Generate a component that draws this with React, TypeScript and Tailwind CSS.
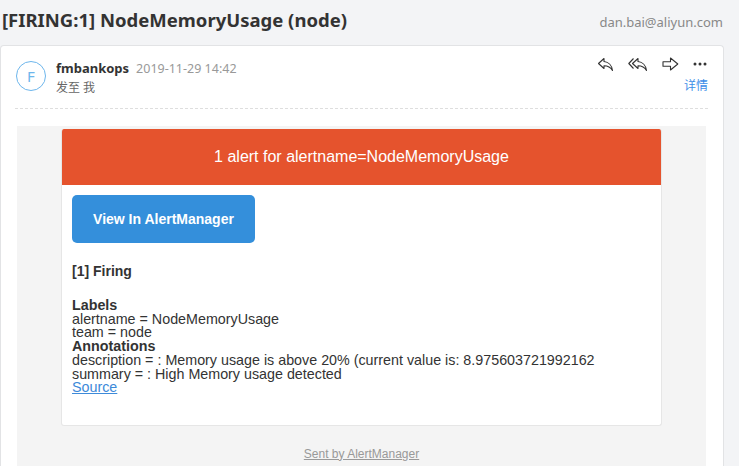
import React from "react";

const ui = "font-['Noto_Sans','Noto_Sans_CJK_SC',sans-serif]";
const mail = "font-['Liberation_Sans',Arial,sans-serif]";

function ReplyIcon() {
  return (
    <svg width="17" height="15" viewBox="0 0 17 15" fill="none" stroke="#333" strokeWidth="1.1" strokeLinejoin="round">
      <path d="M7 1.5 L1.5 6.5 L7 11.5 V8.7 C10.5 8.7 13.5 10 15.5 13.5 C15 8.5 11.5 5 7 4.5 Z" />
    </svg>
  );
}

function ReplyAllIcon() {
  return (
    <svg width="20" height="15" viewBox="0 0 20 15" fill="none" stroke="#333" strokeWidth="1.1" strokeLinejoin="round">
      <path d="M5.5 1.5 L0.8 6.5 L5.5 11.5" />
      <path d="M10 1.5 L4.5 6.5 L10 11.5 V8.7 C13.5 8.7 16.5 10 18.5 13.5 C18 8.5 14.5 5 10 4.5 Z" />
    </svg>
  );
}

function ForwardIcon() {
  return (
    <svg width="17" height="15" viewBox="0 0 17 15" fill="none" stroke="#333" strokeWidth="1.1" strokeLinejoin="round">
      <path d="M1 4.8 H8.5 V1 L15.8 7 L8.5 13 V9.2 H1 Z" />
    </svg>
  );
}

function MoreIcon() {
  return (
    <svg width="14" height="4" viewBox="0 0 14 4" fill="#333">
      <circle cx="2" cy="2" r="1.5" />
      <circle cx="7" cy="2" r="1.5" />
      <circle cx="12" cy="2" r="1.5" />
    </svg>
  );
}

export default function App() {
  return (
    <div className={`w-[739px] h-[466px] overflow-hidden bg-[#f3f4f6] ${ui}`}>
      {/* subject line */}
      <div className="flex h-[45px] items-start justify-between pl-[2px] pr-[16px]">
        <h1 className="mt-[8px] text-[18.5px] font-bold leading-[24px] text-[#333]">
          [FIRING:1] NodeMemoryUsage (node)
        </h1>
        <span className="mt-[13px] text-[13px] leading-[18px] text-[#888]">dan.bai@aliyun.com</span>
      </div>

      {/* message card */}
      <div className="mr-[15px] h-[421px] rounded-t-[4px] border border-b-0 border-[#e2e3e5] bg-white">
        <div className="flex h-[47px] items-start justify-between pl-[15px] pr-[16px] pt-[15px]">
          <div className="flex gap-[10px]">
            <div className="flex h-[30px] w-[30px] items-center justify-center rounded-full border border-[#6db6ec] text-[15px] text-[#6db6ec]">
              F
            </div>
            <div className="-mt-[2px]">
              <div className="flex items-baseline gap-[7px]">
                <span className="text-[13px] font-bold leading-[18px] text-[#333]">fmbankops</span>
                <span className="text-[12.5px] leading-[18px] text-[#999]">2019-11-29 14:42</span>
              </div>
              <div className="mt-[1px] text-[12px] leading-[17px] text-[#666]">发至 我</div>
            </div>
          </div>
          <div className="-mt-[6px] flex flex-col items-end">
            <div className="flex h-[18px] items-center gap-[14px]">
              <ReplyIcon />
              <ReplyAllIcon />
              <ForwardIcon />
              <MoreIcon />
            </div>
            <span className="mr-[-1px] mt-[4px] text-[12px] leading-[17px] text-[#3d8ee8]">详情</span>
          </div>
        </div>

        <div className="ml-[14px] mr-[15px] mt-[15px] border-t border-dashed border-[#dedede]" />

        {/* email body */}
        <div className={`ml-[16px] mr-[17px] mt-[17px] h-[345px] bg-[#f4f4f4] pt-[3px] ${mail}`}>
          <div className="mx-[44px] overflow-hidden rounded-[3px] border border-t-0 border-[#e6e6e6] bg-white">
            <div className="flex h-[56px] items-center justify-center bg-[#e5532d] text-[16px] text-white">
              1 alert for alertname=NodeMemoryUsage
            </div>
            <div className="px-[10px] pb-[30px] pt-[10px] text-[14px] text-[#333]">
              <div className="flex h-[48px] w-[183px] items-center justify-center rounded-[5px] bg-[#348fdb] font-bold text-white">
                View In AlertManager
              </div>
              <div className="mt-[20px] font-bold leading-[16px]">[1] Firing</div>
              <div className="mt-[20px] text-[14.3px] leading-[13.7px]">
                <div className="font-bold">Labels</div>
                <div>alertname = NodeMemoryUsage</div>
                <div>team = node</div>
                <div className="font-bold">Annotations</div>
                <div>description = : Memory usage is above 20% (current value is: 8.975603721992162</div>
                <div>summary = : High Memory usage detected</div>
                <div className="text-[#3d8ad9] underline">Source</div>
              </div>
            </div>
          </div>
          <div className="mt-[19px] text-center text-[12px] text-[#999] underline">Sent by AlertManager</div>
        </div>
      </div>
    </div>
  );
}
